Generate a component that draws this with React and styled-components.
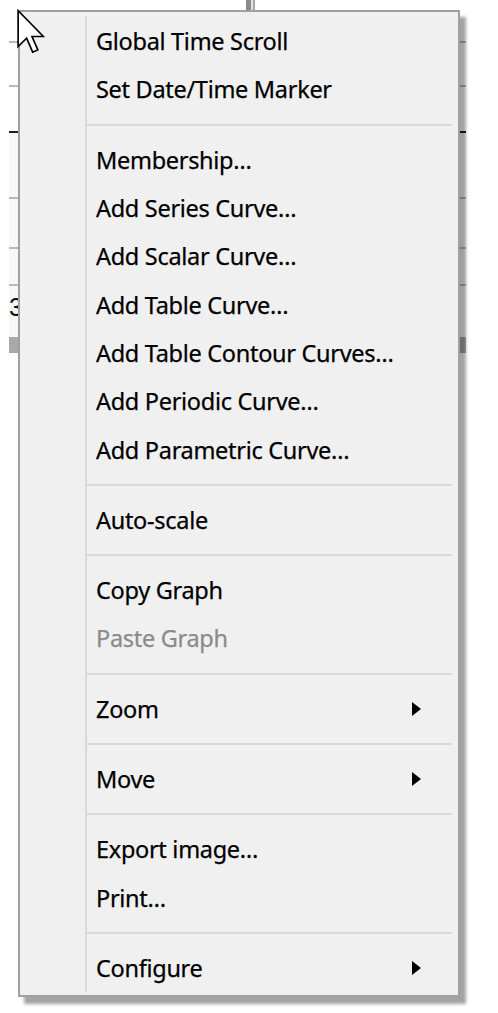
import styled, { createGlobalStyle } from "styled-components";

const GlobalStyle = createGlobalStyle`
  html, body {
    margin: 0;
    padding: 0;
    background: #ffffff;
  }
`;

const Page = styled.div`
  position: relative;
  width: 498px;
  height: 1013px;
  overflow: hidden;
  background: #ffffff;
  font-family: "Noto Sans", "Open Sans", sans-serif;
`;

// the grid window that sits under the popup; only its edges peek out
const Backdrop = styled.div`
  margin-left: 9px;
  width: 457px;
  display: flex;
  flex-direction: column;
`;

const BackRow = styled.div`
  height: ${(p) => p.h}px;
  border-bottom: ${(p) => p.line ?? 2}px solid ${(p) => p.color || "#b9b9b9"};
  background: ${(p) => p.bg || "transparent"};
  box-sizing: border-box;
  display: flex;
  align-items: center;
  color: #111;
`;

const CellDigit = styled.span`
  font-family: "Liberation Sans", sans-serif;
  font-size: 25px;
  line-height: 1;
  margin-top: -8px;
`;

const Handle = styled.div`
  position: absolute;
  left: 246px;
  top: 0;
  width: 9px;
  height: 10px;
  background: linear-gradient(90deg, #8a8a8a 0 5px, #e4e4e4 5px 7px, #a6a6a6 7px);
`;

const Menu = styled.div`
  position: absolute;
  left: 18px;
  top: 10px;
  width: 442px;
  height: 987px;
  box-sizing: border-box;
  border: 2px solid #a0a0a0;
  background: #f0f0f0;
  box-shadow: 6px 7px 3px rgba(0, 0, 0, 0.36);
  display: flex;
  padding: 4px 0 3px 0;
`;

const Gutter = styled.div`
  width: 65px;
  border-right: 2px solid #d9d9d9;
  flex-shrink: 0;
`;

const Items = styled.div`
  flex: 1;
  display: flex;
  flex-direction: column;
  padding: 1px 6px 0 0;
`;

const Item = styled.div`
  height: 48.3px;
  flex-shrink: 0;
  display: flex;
  align-items: center;
  justify-content: space-between;
  padding: 0 31px 0 9px;
  font-size: 23.5px;
  letter-spacing: -0.3px;
  -webkit-text-stroke: 0.25px currentColor;
  color: ${(p) => (p.disabled ? "#8b8b8b" : "#000000")};
  white-space: nowrap;
`;

const SubArrow = styled.span`
  width: 0;
  height: 0;
  border-left: 9px solid #000;
  border-top: 7.5px solid transparent;
  border-bottom: 7.5px solid transparent;
`;

const Separator = styled.div`
  height: 22px;
  flex-shrink: 0;
  display: flex;
  align-items: center;

  &::after {
    content: "";
    flex: 1;
    height: 2px;
    background: #d9d9d9;
  }
`;

const Cursor = styled.svg`
  position: absolute;
  left: 17px;
  top: 9px;
`;

const entries = [
  { label: "Global Time Scroll" },
  { label: "Set Date/Time Marker" },
  "sep",
  { label: "Membership…" },
  { label: "Add Series Curve…" },
  { label: "Add Scalar Curve…" },
  { label: "Add Table Curve…" },
  { label: "Add Table Contour Curves…" },
  { label: "Add Periodic Curve…" },
  { label: "Add Parametric Curve…" },
  "sep",
  { label: "Auto-scale" },
  "sep",
  { label: "Copy Graph" },
  { label: "Paste Graph", disabled: true },
  "sep",
  { label: "Zoom", sub: true },
  "sep",
  { label: "Move", sub: true },
  "sep",
  { label: "Export image…" },
  { label: "Print…" },
  "sep",
  { label: "Configure", sub: true },
];

const App = () => {
  return (
    <Page>
      <GlobalStyle />
      <Backdrop>
        <BackRow h={43} />
        <BackRow h={44} />
        <BackRow h={46} color="#1e1e1e" />
        <BackRow h={66} bg="#f7f7f7" />
        <BackRow h={50} bg="#f7f7f7" />
        <BackRow h={37} bg="#f7f7f7" />
        <BackRow h={51} bg="#f7f7f7" line={0}>
          <CellDigit>3</CellDigit>
        </BackRow>
        <BackRow h={16} bg="#a9a9a9" line={0} />
      </Backdrop>
      <Handle />

      <Menu>
        <Gutter />
        <Items>
          {entries.map((e, i) =>
            e === "sep" ? (
              <Separator key={i} />
            ) : (
              <Item key={i} disabled={e.disabled}>
                <span>{e.label}</span>
                {e.sub && <SubArrow />}
              </Item>
            )
          )}
        </Items>
      </Menu>

      <Cursor width="28" height="46" viewBox="0 0 12.5 20">
        <path
          d="M0.5 0.5 V16.5 L4.3 12.8 L7 19 L9.3 18 L6.7 12 H11.8 Z"
          fill="#ffffff"
          stroke="#000000"
          strokeWidth="0.75"
          strokeLinejoin="miter"
        />
      </Cursor>
    </Page>
  );
};

export default App;
